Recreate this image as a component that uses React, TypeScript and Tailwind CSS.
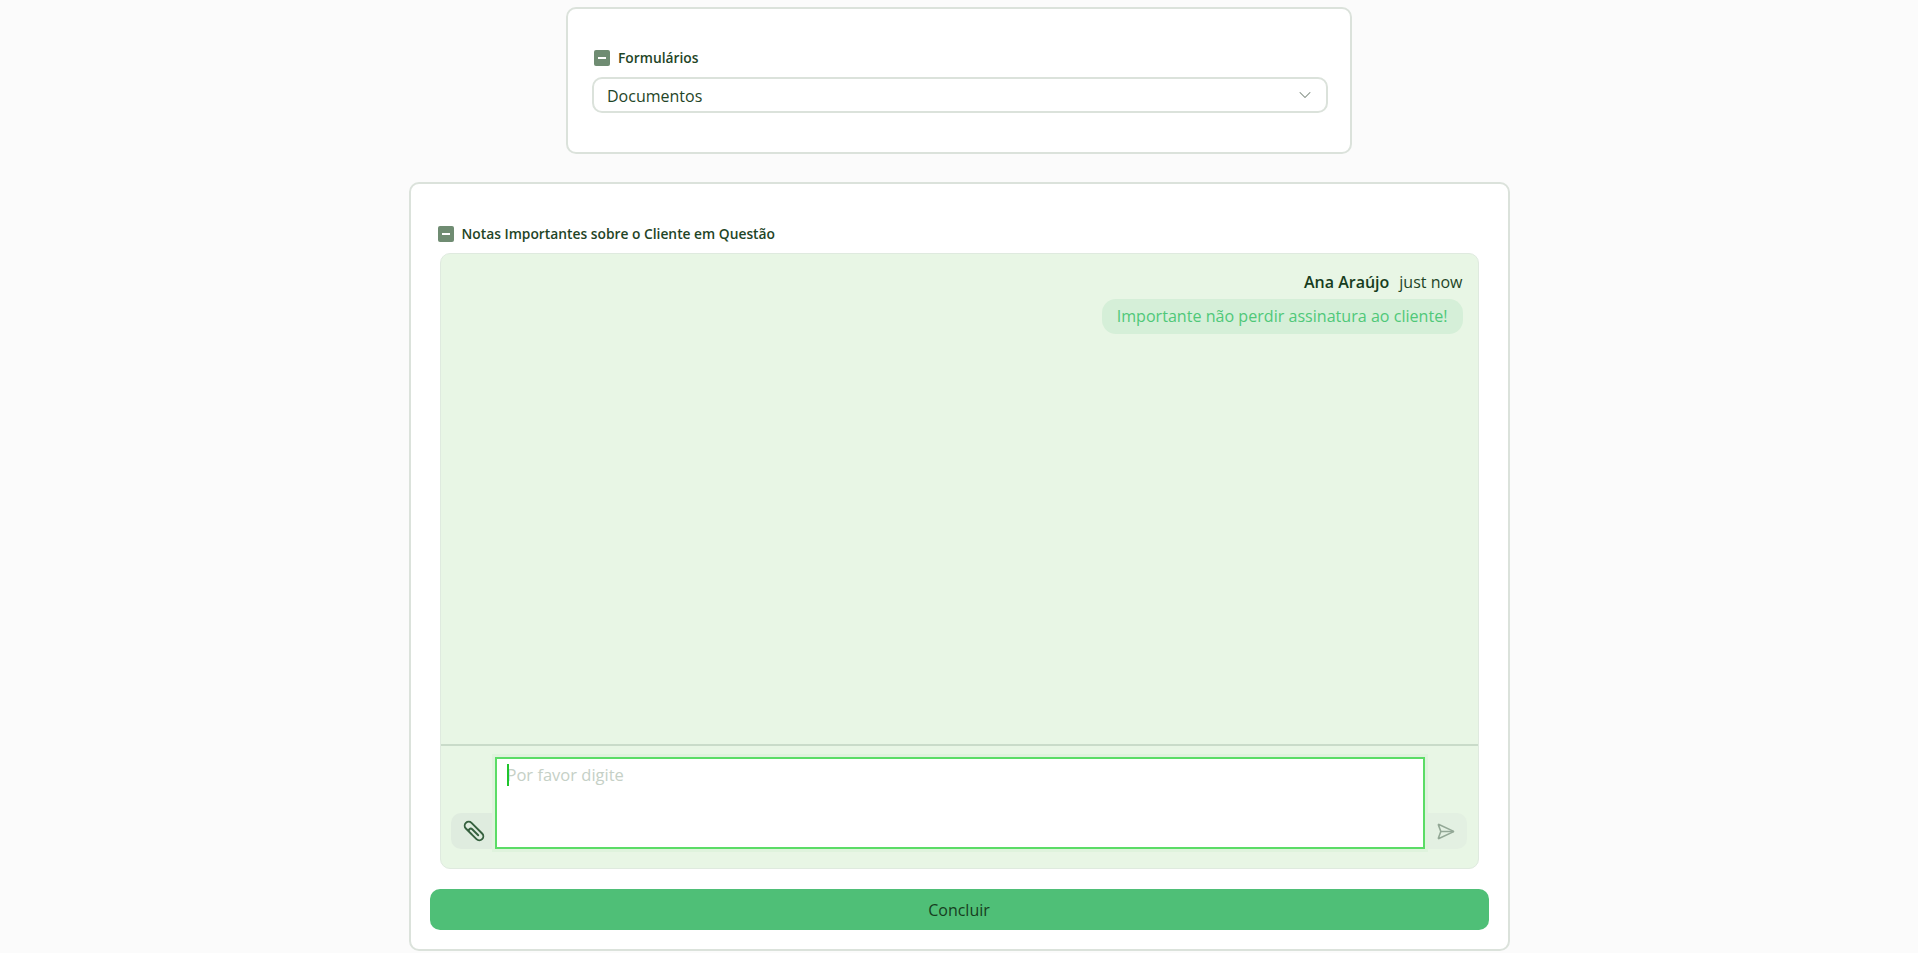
import { ChevronDown, SendHorizontal } from 'lucide-react';

function SectionLabel({ text }: { text: string }) {
    return (
        <div className="flex items-center gap-2 h-4">
            <span className="w-4 h-4 rounded-[2px] bg-[#6f8c72] flex items-center justify-center">
                <span className="w-2 h-[2px] bg-white"></span>
            </span>
            <span className="text-[13.8px] font-semibold text-[#1f4527] leading-4">{text}</span>
        </div>
    );
}

function ClipIcon() {
    return (
        <svg viewBox="0 0 24 24" className="w-[24px] h-[24px] text-[#35603e]" fill="none" stroke="currentColor" strokeWidth="1.9" strokeLinecap="round" strokeLinejoin="round">
            <g transform="rotate(45 12 12)">
                <path d="M13 16H4.5a4 4 0 0 1 0-8h15a4 4 0 0 1 0 8H9.5a2 2 0 0 1 0-4H18" />
            </g>
        </svg>
    );
}

export default function App() {
    return (
        <div className="min-h-[953px] bg-[#fbfbfb] flex flex-col items-center pt-[7px] font-['Open_Sans','Noto_Sans',sans-serif] text-[#1f4527]">
            <div className="w-[786px] h-[147px] bg-white rounded-[10px] border-2 border-[#dbe2db] pt-[41px] pl-[24px] pr-[22px]">
                <div className="pl-[2px]">
                    <SectionLabel text="Formulários" />
                </div>
                <div className="mt-[11px] h-[36px] rounded-[10px] border-2 border-[#dbe2db] flex items-center justify-between pl-[13px] pr-[11px]">
                    <span className="text-[16px] pt-[1px]">Documentos</span>
                    <ChevronDown className="w-[20px] h-[20px] text-[#7d8a7f]" strokeWidth={1.25} />
                </div>
            </div>

            <div className="mt-[28px] w-[1101px] h-[769px] bg-white rounded-[10px] border-2 border-[#dbe2db] pt-[42px] px-[19px]">
                <div className="pl-[8px]">
                    <SectionLabel text="Notas Importantes sobre o Cliente em Questão" />
                </div>
                <div className="mt-[11px] ml-[10px] mr-[10px] h-[616px] rounded-[10px] bg-[#e8f6e5] border border-[#dfeadf] flex flex-col">
                    <div className="h-[492px] border-b-2 border-[#c9dbc9] pt-[15px] pr-[15px] flex flex-col items-end">
                        <div className="flex items-center gap-[10px] text-[16px] leading-[26px]">
                            <span className="font-semibold text-[#173d20]">Ana Araújo</span>
                            <span>just now</span>
                        </div>
                        <div className="mt-[4px] h-[35px] pl-[15px] pr-[15px] rounded-[14px] bg-[#d5efd8] text-[#4fc878] text-[16.1px] flex items-center">
                            Importante não perdir assinatura ao cliente!
                        </div>
                    </div>
                    <div className="flex-1 relative flex items-end pl-[10px] pr-[11px] pb-[19px]">
                        <button className="w-[44px] h-[36px] rounded-l-[10px] bg-[#dfecdf] flex items-center pl-[11px]">
                            <ClipIcon />
                        </button>
                        <div className="relative flex-1 h-[92px] bg-white border-[2.5px] border-[#5bdc66] shadow-[0_0_0_3px_#dff3dd]">
                            <textarea
                                className="w-full h-full resize-none outline-none bg-transparent text-[16.5px] leading-[24px] pl-[10px] pt-[4px] placeholder:text-[#c5d0c6]"
                                placeholder="Por favor digite"
                            ></textarea>
                            <span className="absolute left-[10px] top-[5px] w-[2px] h-[22px] bg-[#1fc42c]"></span>
                        </div>
                        <button className="w-[42px] h-[36px] rounded-r-[10px] bg-[#e3f0e2] flex items-center justify-center">
                            <SendHorizontal className="w-[19px] h-[19px] text-[#93a896]" strokeWidth={2} />
                        </button>
                    </div>
                </div>
                <button className="mt-[20px] w-full h-[41px] rounded-[10px] bg-[#4fbf77] text-[16px] text-[#173d20]">
                    Concluir
                </button>
            </div>
        </div>
    );
}
